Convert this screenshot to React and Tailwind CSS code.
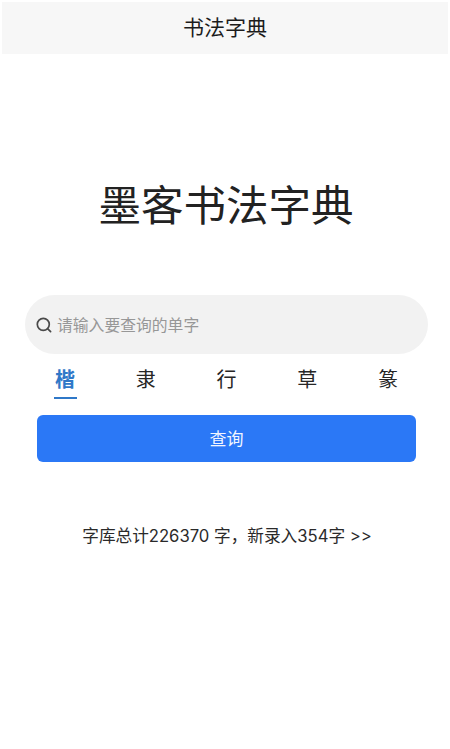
import React from "react";

const font = { fontFamily: '"Noto Sans CJK SC", "Noto Sans", sans-serif' };

function SearchIcon() {
  return (
    <svg width="16" height="16" viewBox="0 0 16 16" fill="none" stroke="#4a4a4a" strokeWidth="1.7" strokeLinecap="round" className="shrink-0">
      <circle cx="7.3" cy="7.3" r="6" />
      <path d="M11.8 11.8 L14.6 14.6" />
    </svg>
  );
}

export default function App() {
  const scripts = ["楷", "隶", "行", "草", "篆"];
  return (
    <div style={font} className="w-[450px] h-[749px] bg-white overflow-hidden flex flex-col">
      <div className="mt-[2px] mx-[2px] h-[52px] pb-[3px] bg-[#f7f7f7] flex items-center justify-center text-[21px] text-[#1c1c1c]">
        书法字典
      </div>
      <h1 className="mt-[116px] h-[66px] pl-[2px] flex items-center justify-center text-[42.5px] font-normal text-[#222222]">
        墨客书法字典
      </h1>
      <div className="mt-[59px] ml-[25px] mr-[22px] h-[59px] rounded-[30px] bg-[#f2f2f2] flex items-center pl-[11px] gap-[5px]">
        <SearchIcon />
        <span className="text-[15.8px] text-[#979797]">请输入要查询的单字</span>
      </div>
      <div className="mt-[9px] ml-[55px] mr-[52px] flex justify-between">
        {scripts.map((s, i) => (
          <div key={s} className="flex flex-col items-center w-[20px]">
            <span className={`h-[32px] flex items-center text-[20px] ${i === 0 ? "font-bold text-[#2f78c8]" : "text-[#262626]"}`}>{s}</span>
            <span className={`mt-[2px] h-[2px] w-[23px] ${i === 0 ? "bg-[#2f78c8]" : "bg-transparent"}`} />
          </div>
        ))}
      </div>
      <div className="mt-[16px] ml-[37px] mr-[34px] h-[47px] pb-[1px] rounded-[6px] bg-[#2b78f6] flex items-center justify-center text-[17px] text-[#f2f6ff]">
        查询
      </div>
      <div className="mt-[62px] flex justify-center text-[16.65px] text-[#2a2a2a] pl-[4px]" style={{ fontFamily: 'Inter, "Noto Sans CJK SC", sans-serif' }}>
        字库总计226370 字，新录入354字 &gt;&gt;
      </div>
    </div>
  );
}
